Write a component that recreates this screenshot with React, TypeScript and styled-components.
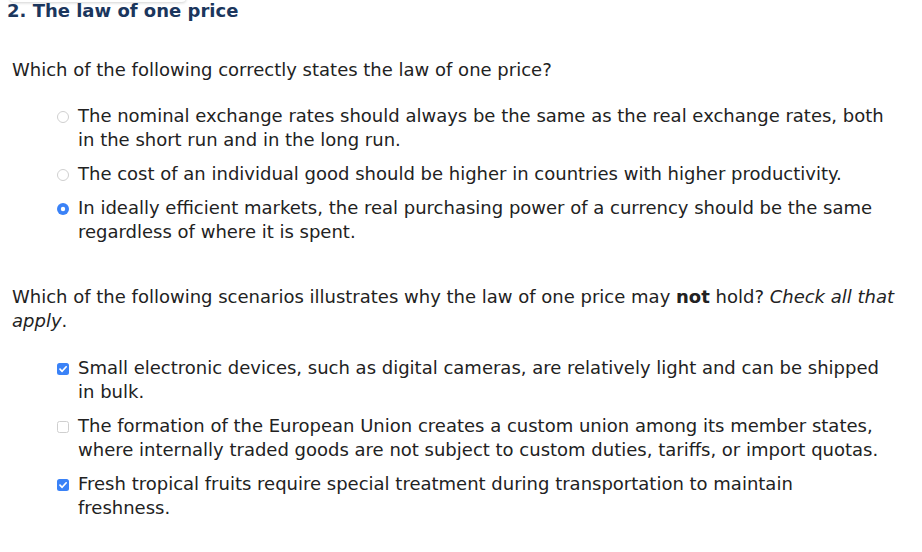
import React from "react";
import styled, { createGlobalStyle } from "styled-components";

const Global = createGlobalStyle`
  html, body { margin: 0; padding: 0; background: #fff; }
  body { font-family: "DejaVu Sans", Verdana, sans-serif; color: #222; }
`;

const Page = styled.div`
  width: 922px;
  height: 552px;
  position: relative;
  overflow: hidden;
  background: #fff;
`;

const TabShadow = styled.div`
  position: absolute;
  left: 10px;
  top: -20px;
  width: 176px;
  height: 22px;
  border-radius: 4px;
  box-shadow: 0 1px 3px rgba(0, 0, 0, 0.18);
  background: #fff;
`;

const Title = styled.h2`
  position: relative;
  margin: 0;
  padding: 1px 0 0 7px;
  font-size: 18px;
  line-height: 20px;
  font-weight: bold;
  color: #1b365d;
`;

const Section = styled.section<{ $top: number }>`
  margin-top: ${(p) => p.$top}px;
  padding: 0 12px;
`;

const Question = styled.p`
  margin: 0;
  font-size: 18px;
  line-height: 24px;
`;

const Options = styled.div<{ $top: number }>`
  margin-top: ${(p) => p.$top}px;
  padding: 0 23px 0 45px;
  display: flex;
  flex-direction: column;
  gap: 10px;
`;

const Option = styled.label`
  display: flex;
  align-items: flex-start;
  gap: 9px;
  font-size: 18px;
  line-height: 24px;
`;

const Mark = styled.span`
  flex: none;
  width: 12px;
  height: 12px;
  margin-top: 7px;
  display: inline-flex;
`;

const Radio = ({ on }: { on?: boolean }) => (
  <Mark>
    <svg width="12" height="12" viewBox="0 0 12 12">
      {on ? (
        <>
          <circle cx="6" cy="6" r="6" fill="#3a82f7" />
          <circle cx="6" cy="6" r="2.2" fill="#fff" />
        </>
      ) : (
        <circle cx="6" cy="6" r="5.5" fill="#fff" stroke="#cfcfcf" strokeWidth="1" />
      )}
    </svg>
  </Mark>
);

const Check = ({ on }: { on?: boolean }) => (
  <Mark>
    <svg width="12" height="12" viewBox="0 0 12 12">
      {on ? (
        <>
          <rect x="0" y="0" width="12" height="12" rx="2.5" fill="#3a82f7" />
          <path d="M3 6.2 L5.1 8.3 L9.2 3.8" fill="none" stroke="#fff" strokeWidth="1.7" strokeLinecap="round" strokeLinejoin="round" />
        </>
      ) : (
        <rect x="0.5" y="0.5" width="11" height="11" rx="2" fill="#fff" stroke="#cfcfcf" strokeWidth="1" />
      )}
    </svg>
  </Mark>
);

const Text = styled.span`
  flex: 1;
`;

export default function App() {
  return (
    <Page>
      <Global />
      <TabShadow />
      <Title>2. The law of one price</Title>

      <Section $top={37}>
        <Question>Which of the following correctly states the law of one price?</Question>
        <Options $top={22}>
          <Option>
            <Radio />
            <Text>
              The nominal exchange rates should always be the same as the real exchange rates, both in the short run and in the long run.
            </Text>
          </Option>
          <Option>
            <Radio />
            <Text>The cost of an individual good should be higher in countries with higher productivity.</Text>
          </Option>
          <Option>
            <Radio on />
            <Text>
              In ideally efficient markets, the real purchasing power of a currency should be the same regardless of where it is spent.
            </Text>
          </Option>
        </Options>
      </Section>

      <Section $top={41}>
        <Question>
          Which of the following scenarios illustrates why the law of one price may <b>not</b> hold? <i>Check all that apply</i>.
        </Question>
        <Options $top={23}>
          <Option>
            <Check on />
            <Text>
              Small electronic devices, such as digital cameras, are relatively light and can be shipped in bulk.
            </Text>
          </Option>
          <Option>
            <Check />
            <Text>
              The formation of the European Union creates a custom union among its member states, where internally traded goods are not subject to custom duties, tariffs, or import quotas.
            </Text>
          </Option>
          <Option>
            <Check on />
            <Text>Fresh tropical fruits require special treatment during transportation to maintain freshness.</Text>
          </Option>
        </Options>
      </Section>
    </Page>
  );
}
